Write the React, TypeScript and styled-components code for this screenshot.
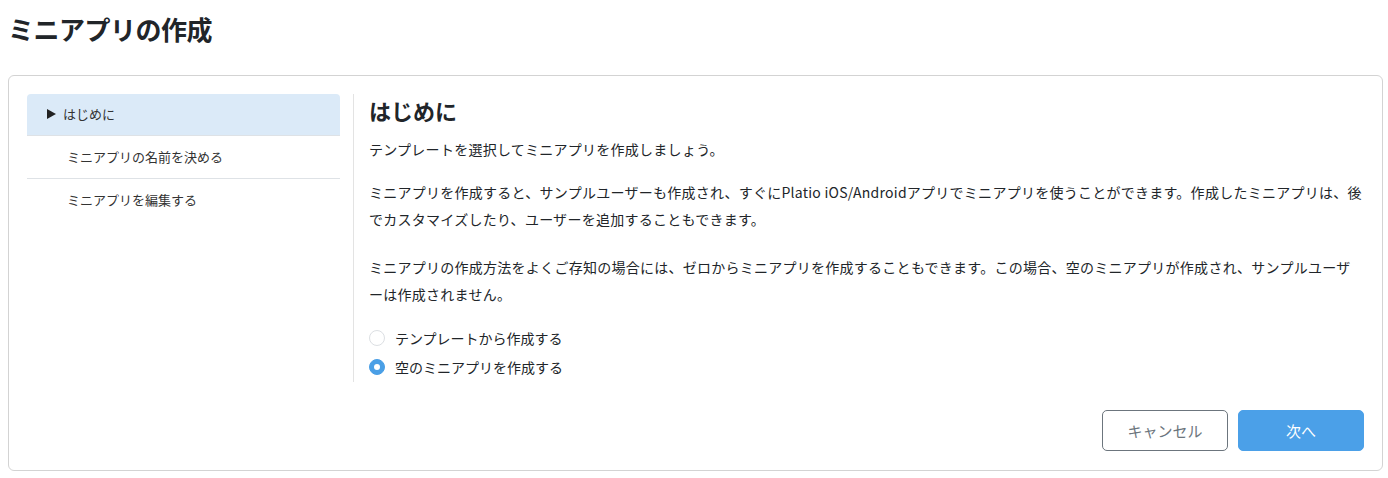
import React, { useState } from "react";
import styled, { createGlobalStyle } from "styled-components";

const GlobalStyle = createGlobalStyle`
  html, body { margin: 0; padding: 0; background: #ffffff; }
  body {
    font-family: "Noto Sans CJK JP", "Noto Sans", sans-serif;
    color: #212529;
  }
  * { box-sizing: border-box; }
`;

const Page = styled.div`
  padding: 0 5px 0 8px;
  width: 1388px;
`;

const Title = styled.h1`
  margin: 0;
  height: 56px;
  display: flex;
  align-items: center;
  font-size: 26px;
  font-weight: 700;
  color: #212529;
  letter-spacing: -0.5px;
`;

const Card = styled.div`
  margin-top: 19px;
  border: 1px solid #d3d3d3;
  border-radius: 6px;
  padding: 18px 18px 19px 18px;
  display: flex;
  flex-direction: column;
`;

const Body = styled.div`
  display: flex;
  align-items: stretch;
`;

const Sidebar = styled.ul`
  list-style: none;
  margin: 0;
  padding: 0;
  width: 313px;
  flex: none;
`;

const NavItem = styled.li<{ $active?: boolean }>`
  height: ${(p) => (p.$active ? "42px" : "43px")};
  display: flex;
  align-items: center;
  padding-left: ${(p) => (p.$active ? "20px" : "40px")};
  padding-bottom: 2px;
  font-size: 13px;
  color: #333;
  background: ${(p) => (p.$active ? "#dbeaf8" : "transparent")};
  border-radius: ${(p) => (p.$active ? "4px 4px 0 0" : "0")};
  border-bottom: 1px solid #dee2e6;
  &:last-child { border-bottom: none; }
`;

const Arrow = styled.span`
  display: inline-block;
  width: 0;
  height: 0;
  border-top: 5px solid transparent;
  border-bottom: 5px solid transparent;
  border-left: 9px solid #222;
  margin-right: 7px;
`;

const Divider = styled.div`
  width: 1px;
  background: #e3e3e3;
  margin: 0 15px 0 13px;
  flex: none;
`;

const Content = styled.div`
  flex: 1;
  min-width: 0;
  padding-bottom: 1px;
`;

const Heading = styled.h2`
  margin: 0 0 10px;
  font-size: 22px;
  line-height: 32px;
  font-weight: 700;
  color: #212529;
`;

const Para = styled.p<{ $mb: number }>`
  margin: 0 0 ${(p) => p.$mb}px;
  font-size: 14px;
  line-height: 27px;
  letter-spacing: 0.26px;
  color: #212529;
`;

const RadioGroup = styled.div`
  display: flex;
  flex-direction: column;
`;

const RadioRow = styled.label`
  height: 29px;
  display: flex;
  align-items: center;
  font-size: 14px;
  color: #212529;
  cursor: pointer;
`;

const HiddenInput = styled.input`
  display: none;
`;

const RadioMark = styled.span<{ $checked: boolean }>`
  width: 16px;
  height: 16px;
  border-radius: 50%;
  flex: none;
  margin-right: 10px;
  background: ${(p) => (p.$checked ? "#4a9fe6" : "#fff")};
  border: 1px solid ${(p) => (p.$checked ? "#4a9fe6" : "#dcdfe3")};
  display: flex;
  align-items: center;
  justify-content: center;
  &::after {
    content: "";
    width: 6px;
    height: 6px;
    border-radius: 50%;
    background: #fff;
    display: ${(p) => (p.$checked ? "block" : "none")};
  }
`;

const Footer = styled.div`
  margin-top: 28px;
  display: flex;
  justify-content: flex-end;
  gap: 10px;
`;

const Button = styled.button<{ $primary?: boolean }>`
  width: 126px;
  height: 41px;
  border-radius: 5px;
  font-family: "Noto Sans CJK JP", "Noto Sans", sans-serif;
  font-size: 15px;
  cursor: pointer;
  border: 1px solid ${(p) => (p.$primary ? "#4ba0e8" : "#6c757d")};
  background: ${(p) => (p.$primary ? "#4ba0e8" : "#fff")};
  color: ${(p) => (p.$primary ? "#fff" : "#6c757d")};
`;

const steps = ["はじめに", "ミニアプリの名前を決める", "ミニアプリを編集する"];

export default function App() {
  const [choice, setChoice] = useState<"template" | "empty">("empty");
  return (
    <>
      <GlobalStyle />
      <Page>
        <Title>ミニアプリの作成</Title>
        <Card>
          <Body>
            <Sidebar>
              {steps.map((s, i) => (
                <NavItem key={s} $active={i === 0}>
                  {i === 0 && <Arrow />}
                  {s}
                </NavItem>
              ))}
            </Sidebar>
            <Divider />
            <Content>
              <Heading>はじめに</Heading>
              <Para $mb={16}>テンプレートを選択してミニアプリを作成しましょう。</Para>
              <Para $mb={21}>
                ミニアプリを作成すると、サンプルユーザーも作成され、すぐにPlatio iOS/Androidアプリでミニアプリを使うことができます。作成したミニアプリは、後でカスタマイズしたり、ユーザーを追加することもできます。
              </Para>
              <Para $mb={15}>
                ミニアプリの作成方法をよくご存知の場合には、ゼロからミニアプリを作成することもできます。この場合、空のミニアプリが作成され、サンプルユーザーは作成されません。
              </Para>
              <RadioGroup>
                <RadioRow>
                  <HiddenInput
                    type="radio"
                    name="mode"
                    checked={choice === "template"}
                    onChange={() => setChoice("template")}
                  />
                  <RadioMark $checked={choice === "template"} />
                  テンプレートから作成する
                </RadioRow>
                <RadioRow>
                  <HiddenInput
                    type="radio"
                    name="mode"
                    checked={choice === "empty"}
                    onChange={() => setChoice("empty")}
                  />
                  <RadioMark $checked={choice === "empty"} />
                  空のミニアプリを作成する
                </RadioRow>
              </RadioGroup>
            </Content>
          </Body>
          <Footer>
            <Button>キャンセル</Button>
            <Button $primary>次へ</Button>
          </Footer>
        </Card>
      </Page>
    </>
  );
}
